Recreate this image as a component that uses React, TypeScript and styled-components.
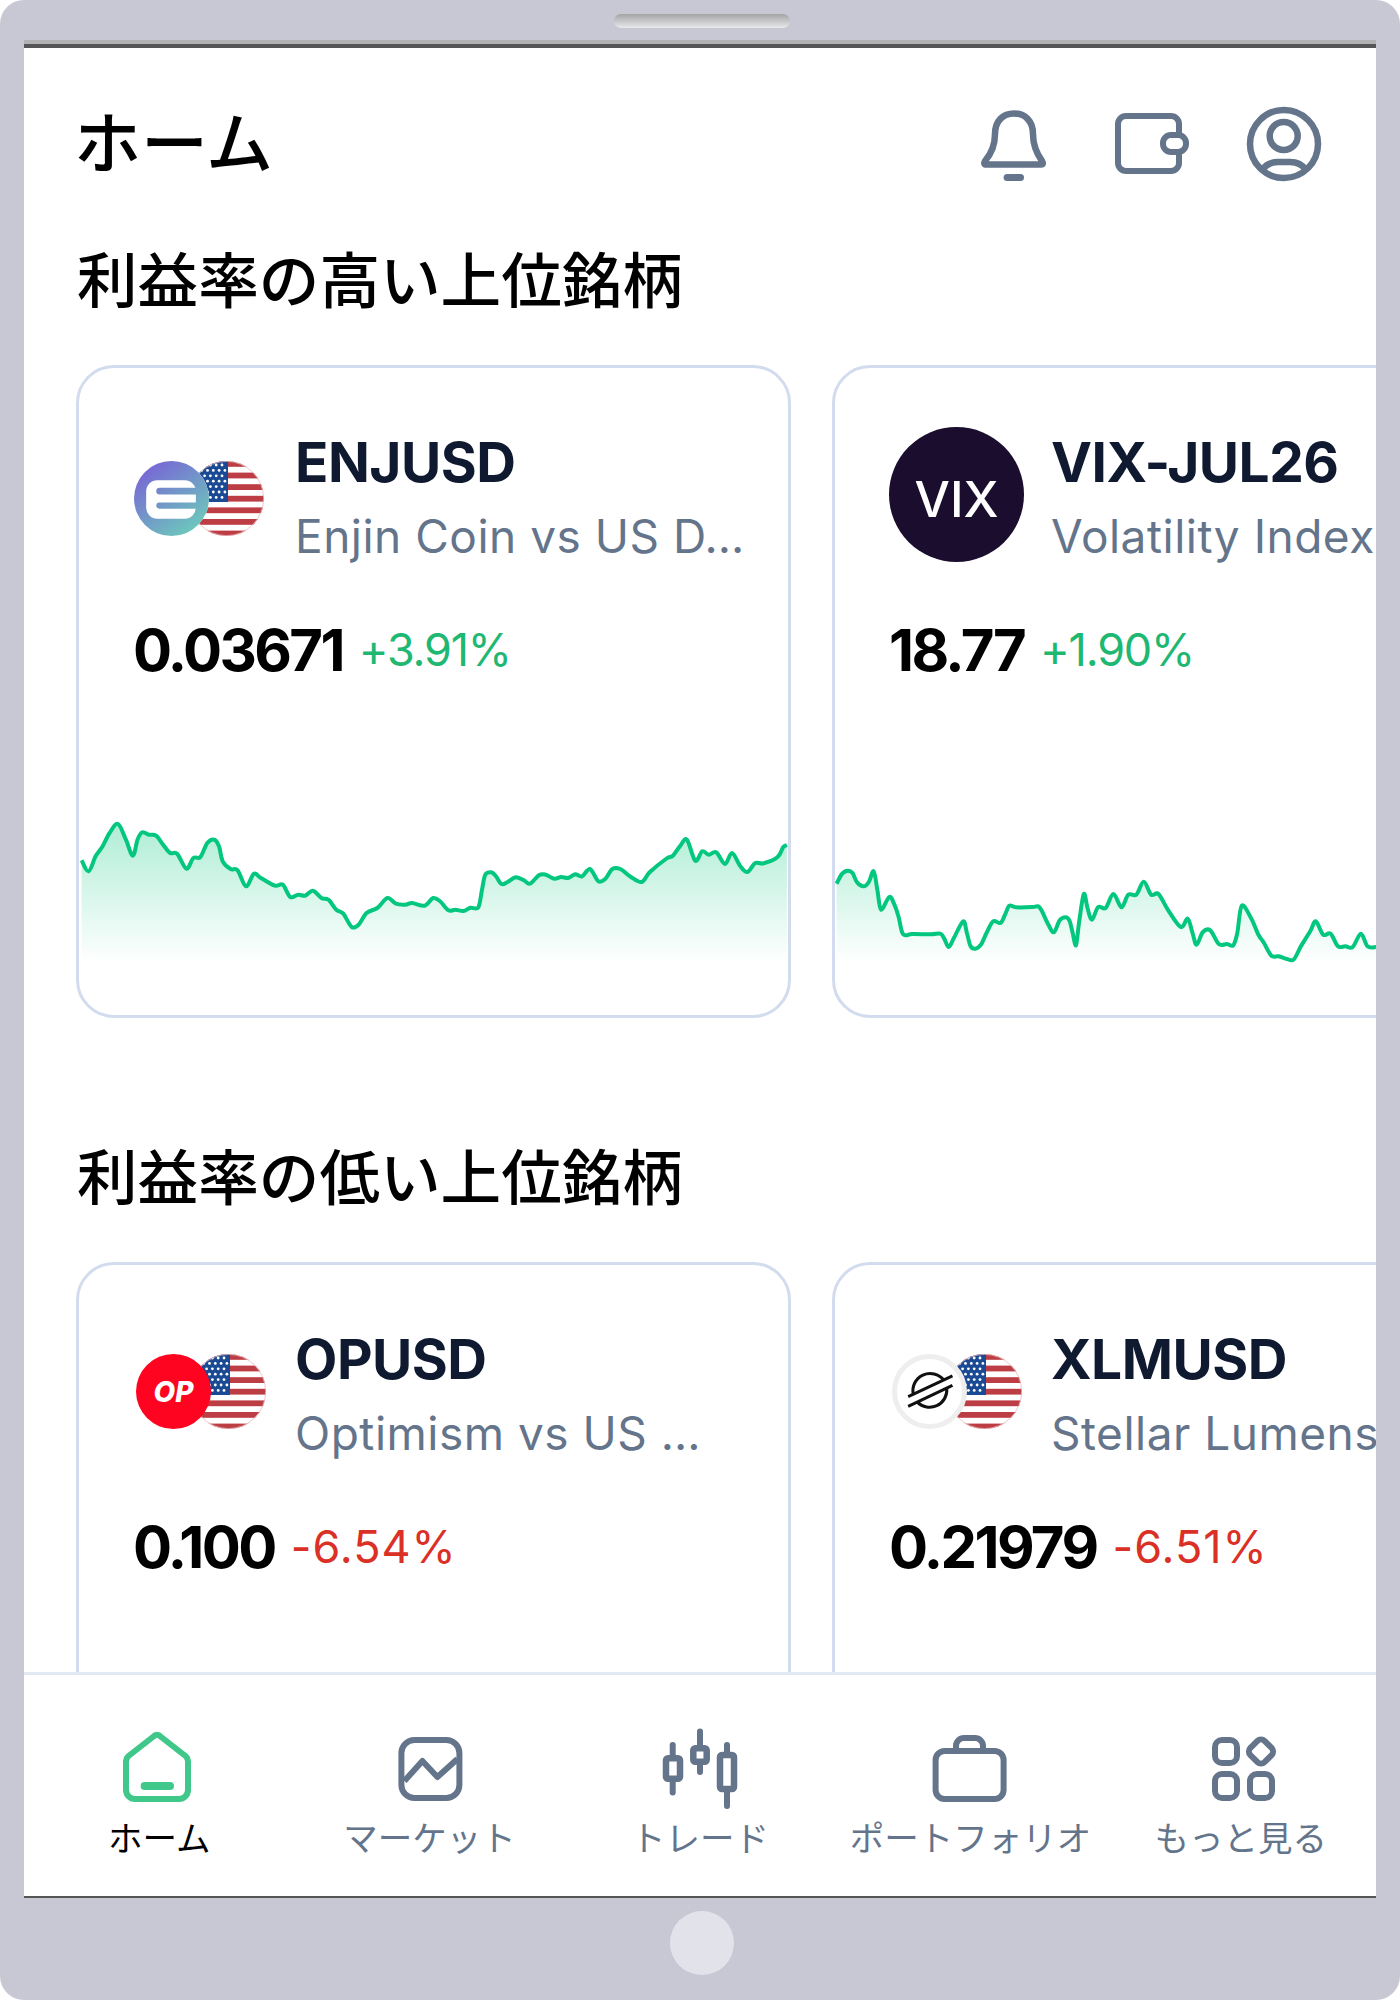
import React, {FC, useId} from "react";
import styled, {createGlobalStyle} from "styled-components";

const SLATE = '#64748B';
const GREEN = '#1FB873';
const RED = '#DB3026';
const LINE_GREEN = '#04C77F';
const BORDER = '#D2DCEE';
const BEZEL = '#C8C8D4';
const LATIN = `"Inter", "Noto Sans CJK JP", sans-serif`;
const CJK = `"Noto Sans CJK JP", sans-serif`;

const GlobalStyle = createGlobalStyle`
  html, body {
    margin: 0;
    background: #fff;
  }
`;

const Device = styled.div`
  width: 1400px;
  height: 2000px;
  display: flex;
  flex-direction: column;
  background: ${BEZEL};
  border-radius: 24px;
  overflow: hidden;
`;
const TopBezel = styled.div`
  height: 40px;
  flex: none;
  display: flex;
  justify-content: center;
  align-items: flex-start;
  padding: 14px 0 0 3px;
  box-sizing: border-box;
`;
const Speaker = styled.div`
  width: 176px;
  height: 14px;
  border-radius: 7px;
  background: linear-gradient(#a4a4a6, #e9e9ec);
`;
const Screen = styled.div`
  flex: 1;
  min-height: 0;
  margin: 0 24px;
  display: flex;
  flex-direction: column;
  background: #fff;
  border-top: 4px solid #b2b2b4;
  box-shadow: inset 0 4px 0 #555;
  border-bottom: 2px solid #555;
`;
const BottomBezel = styled.div`
  height: 102px;
  flex: none;
  display: flex;
  justify-content: center;
  padding: 13px 0 0 3px;
  box-sizing: border-box;
`;
const HomeButton = styled.div`
  width: 64px;
  height: 64px;
  border-radius: 50%;
  background: #E2E3EA;
`;
const Content = styled.div`
  flex: 1;
  min-height: 0;
  overflow: hidden;
`;
const Header = styled.header`
  display: flex;
  align-items: center;
  height: 80px;
  margin-top: 60px;
  padding: 0 52px 0 50px;
`;
const PageTitle = styled.h1`
  flex: 1;
  margin: 0 0 11px;
  font: 500 67px/80px ${CJK};
  color: #000;
`;
const HeaderIcons = styled.div`
  display: flex;
  gap: 52px;
  color: ${SLATE};
`;
const Section = styled.section<{$gap: number}>`
  margin-top: ${p => p.$gap}px;
`;
const SectionTitle = styled.h2`
  margin: 0 0 48px;
  padding-left: 53px;
  font: 500 60.6px/80px ${CJK};
  color: #000;
`;
const Carousel = styled.div`
  display: flex;
  gap: 41px;
  padding-left: 52px;
`;
const Card = styled.article`
  flex: none;
  width: 715px;
  height: 653px;
  box-sizing: border-box;
  border: 3px solid ${BORDER};
  border-radius: 38px;
  display: flex;
  flex-direction: column;
  overflow: hidden;
`;
const CardHead = styled.div`
  display: flex;
  gap: 27px;
  padding: 59px 54px 0;
  height: 145px;
  box-sizing: content-box;
`;
const LogoBox = styled.div`
  flex: none;
  width: 135px;
  height: 135px;
  display: flex;
  align-items: center;
  justify-content: center;
`;
const Names = styled.div`
  min-width: 0;
  flex: 1;
  margin-top: -2px;
`;
const Symbol = styled.div`
  font: 700 55px/74px ${LATIN};
  letter-spacing: -0.5px;
  color: #0F1A30;
  white-space: nowrap;
`;
const Description = styled.div`
  font: 400 46px/75px ${LATIN};
  letter-spacing: 0.5px;
  color: ${SLATE};
  white-space: nowrap;
`;
const Quote = styled.div`
  display: flex;
  align-items: center;
  gap: 16px;
  padding: 43px 54px 0;
`;
const Price = styled.span`
  font: 700 58px/70px ${LATIN};
  letter-spacing: -2.6px;
  color: #000;
`;
const Change = styled.span<{$up: boolean}>`
  font: 400 45px/70px ${LATIN};
  letter-spacing: ${p => (p.$up ? -1.2 : 1)}px;
  color: ${p => (p.$up ? GREEN : RED)};
`;
const Chart = styled.svg`
  display: block;
  flex: none;
  margin-top: auto;
  margin-bottom: 48px;
`;
const PairWrap = styled.div<{$dx: number; $dy: number}>`
  display: flex;
  margin: ${p => p.$dy}px 0 0 ${p => p.$dx}px;
`;
const Coin = styled.div<{$bg: string}>`
  position: relative;
  z-index: 1;
  flex: none;
  width: 75px;
  height: 75px;
  box-sizing: border-box;
  border-radius: 50%;
  background: ${p => p.$bg};
  display: flex;
  align-items: center;
  justify-content: center;
`;
const RingCoin = styled(Coin)`
  border: 5px solid #EEEEEE;
`;
const OpMark = styled.span`
  font: italic 800 28px/1 ${LATIN};
  color: #fff;
`;
const IndexCoin = styled.div`
  width: 135px;
  height: 135px;
  border-radius: 50%;
  background: #1A0D2E;
  color: #fff;
  font: 500 50px/145px ${LATIN};
  text-align: center;
  overflow: hidden;
`;
const FlagSvg = styled.svg`
  flex: none;
  margin-left: -20px;
`;
const NavBar = styled.nav`
  flex: none;
  height: 224px;
  box-sizing: border-box;
  border-top: 3px solid #E2E8F4;
  padding-top: 49px;
  display: grid;
  grid-template-columns: repeat(5, 1fr);
  background: #fff;
`;
const NavItem = styled.a<{$active?: boolean}>`
  display: flex;
  flex-direction: column;
  align-items: center;
  font: 400 34.5px/44px ${CJK};
  color: ${p => (p.$active ? '#000' : SLATE)};
  svg {
    color: ${p => (p.$active ? '#40C78A' : SLATE)};
  }
`;

const toPoints = (raw: number[], sx: number, dx: number, dy: number): number[][] => {
  const pts: number[][] = [];
  for (let i = 0; i < raw.length; i += 2) pts.push([raw[i] / sx + dx, raw[i + 1] / 3 + dy]);
  return pts;
};

// catmull-rom, the chart lines in the app are smoothed
const smooth = (pts: number[][]) => {
  let d = `M${pts[0][0].toFixed(1)} ${pts[0][1].toFixed(1)}`;
  for (let i = 0; i < pts.length - 1; i++) {
    const p0 = pts[Math.max(i - 1, 0)];
    const p1 = pts[i];
    const p2 = pts[i + 1];
    const p3 = pts[Math.min(i + 2, pts.length - 1)];
    const c1x = p1[0] + (p2[0] - p0[0]) / 6;
    const c1y = p1[1] + (p2[1] - p0[1]) / 6;
    const c2x = p2[0] - (p3[0] - p1[0]) / 6;
    const c2y = p2[1] - (p3[1] - p1[1]) / 6;
    d += `C${c1x.toFixed(1)} ${c1y.toFixed(1)} ${c2x.toFixed(1)} ${c2y.toFixed(1)} ${p2[0].toFixed(1)} ${p2[1].toFixed(1)}`;
  }
  return d;
};

const ENJ_LINE = toPoints([
  25,232,40,265,55,220,70,190,85,150,103,123,120,170,135,218,145,170,155,148,170,155,185,158,200,185,215,210,230,212,250,257,
  265,225,280,222,295,180,310,170,320,190,328,235,345,258,360,262,378,310,395,272,410,285,440,308,457,305,473,342,490,335,505,338,
  522,323,540,345,555,350,572,380,587,392,605,432,620,425,637,390,660,375,682,345,700,362,720,365,735,360,762,368,780,345,795,355,
  813,382,828,380,845,384,860,374,877,373,885,320,892,275,905,268,915,280,927,303,940,297,957,283,975,292,988,302,1008,276,1022,275,
  1040,287,1055,282,1070,285,1085,274,1100,280,1117,258,1135,295,1150,287,1165,258,1182,258,1205,282,1228,297,1245,268,1280,228,1295,218,1310,190,
  1325,170,1343,233,1358,205,1372,215,1388,208,1407,243,1422,210,1440,250,1455,267,1472,240,1490,241,1520,222,1532,192,1540,186,
], 2.148, -9, -30);

const VIX_LINE = toPoints([
  45,302,60,272,75,263,88,270,100,298,118,310,132,297,145,265,155,320,165,380,187,342,200,362,212,400,222,448,232,457,250,453,300,454,325,452,
  335,465,348,492,362,465,387,415,397,450,407,490,420,497,435,485,450,450,468,415,488,420,500,395,512,368,530,373,575,372,590,370,600,385,615,420,
  632,448,648,412,665,403,675,415,683,450,692,487,700,420,713,333,723,375,735,410,752,372,772,375,793,333,815,373,833,335,855,335,875,296,895,335,
  915,333,940,380,975,432,994,407,1007,450,1018,485,1035,447,1055,442,1078,483,1100,483,1117,487,1128,450,1140,368,1165,405,1185,455,1200,480,
  1220,518,1240,520,1260,527,1280,530,1300,490,1325,445,1340,415,1360,455,1380,452,1400,490,1420,490,1440,492,1462,452,1480,490,1503,492,
], 2.703, -15, -30);

const Sparkline: FC<{points: number[][]}> = ({points}) => {
  const id = useId();
  const line = smooth(points);
  const last = points[points.length - 1];
  return (
    <Chart width={709} height={154} viewBox="0 0 709 154">
      <defs>
        <linearGradient id={id} gradientUnits="userSpaceOnUse" x1="0" y1="10" x2="0" y2="150">
          <stop offset="0" stopColor={LINE_GREEN} stopOpacity="0.32"/>
          <stop offset="1" stopColor={LINE_GREEN} stopOpacity="0"/>
        </linearGradient>
      </defs>
      <path d={`${line}L${last[0]} 154L${points[0][0]} 154Z`} fill={`url(#${id})`}/>
      <path d={line} fill="none" stroke={LINE_GREEN} strokeWidth="4" strokeLinejoin="round"/>
    </Chart>
  );
};

const Flag: FC = () => {
  const id = useId();
  const stars: number[][] = [];
  for (let r = 0; r < 7; r++) {
    for (let c = 0; c < 6; c++) stars.push([4 + c * 5.8 + (r % 2) * 2.9, 4 + r * 5.4]);
  }
  return (
    <FlagSvg width={75} height={75} viewBox="0 0 75 75">
      <defs>
        <clipPath id={id}><circle cx="37.5" cy="37.5" r="37.5"/></clipPath>
      </defs>
      <g clipPath={`url(#${id})`}>
        <rect width="75" height="75" fill="#fff"/>
        {Array.from({length: 7}, (_, i) => <rect key={i} y={i * 11.6} width="75" height="5.8" fill="#BD3D44"/>)}
        <rect width="39" height="41" fill="#1B4A94"/>
        {stars.map(([x, y], i) => <circle key={i} cx={x} cy={y} r="1.4" fill="#fff"/>)}
      </g>
      <circle cx="37.5" cy="37.5" r="37.1" fill="none" stroke="#E9B9BC" strokeWidth="0.8"/>
    </FlagSvg>
  );
};

const EnjinMark: FC = () => {
  const id = useId();
  return (
    <svg width={75} height={75} viewBox="0 0 74 74">
      <defs>
        <linearGradient id={id} gradientUnits="userSpaceOnUse" x1="12" y1="6" x2="60" y2="70">
          <stop offset="0" stopColor="#7866D5"/>
          <stop offset="1" stopColor="#6CCABB"/>
        </linearGradient>
      </defs>
      <circle cx="37" cy="37" r="37" fill={`url(#${id})`}/>
      <rect x="12" y="19" width="49" height="38" rx="11" fill="#fff"/>
      <rect x="22" y="26.5" width="42" height="6.5" rx="3.2" fill={`url(#${id})`}/>
      <rect x="22" y="41" width="42" height="6" rx="3" fill={`url(#${id})`}/>
    </svg>
  );
};

const StellarMark: FC = () => (
  <svg width={65} height={65} viewBox="5 5 64 64" fill="none" stroke="#111" strokeWidth="3">
    <path d="M16 42L59.6 21.7M16 51.7L59.6 31"/>
    <path d="M21 39.7A17 17 0 0 1 51 25.7M54 34A17 17 0 0 1 25 47.5"/>
  </svg>
);

const CoinPair: FC<{dx?: number; dy?: number; children: React.ReactNode}> = ({dx = 0, dy = 0, children}) => (
  <PairWrap $dx={dx} $dy={dy}>
    {children}
    <Flag/>
  </PairWrap>
);

const BellIcon: FC = () => (
  <svg width={80} height={80} viewBox="0 0 80 80" fill="none" stroke="currentColor" strokeWidth="6.5" strokeLinejoin="round">
    <path d="M15 30C15 17 23 9.5 34 9.5C45 9.5 53 17 53 30C53 42 57 50 62 57Q64 60.5 61 60.5H6.5Q3 60.5 5 57C11 50 15 42 15 30Z"/>
    <rect x="23.6" y="70" width="20.4" height="7" rx="3.5" fill="currentColor" stroke="none"/>
  </svg>
);

const WalletIcon: FC = () => (
  <svg width={80} height={80} viewBox="0 0 80 80" fill="none" stroke="currentColor" strokeWidth="6">
    <path d="M67 31V20a8 8 0 0 0-8-8H14a8 8 0 0 0-8 8V59a8 8 0 0 0 8 8H59a8 8 0 0 0 8-8V48"/>
    <rect x="51" y="31" width="23" height="17" rx="8"/>
  </svg>
);

const ProfileIcon: FC = () => (
  <svg width={80} height={80} viewBox="0 0 80 80" fill="none" stroke="currentColor" strokeWidth="6.5">
    <circle cx="40" cy="40" r="34"/>
    <circle cx="39.7" cy="32" r="14"/>
    <path d="M18 66C22 60 28 58 34 58H46C52 58 58 60 62 66"/>
  </svg>
);

const NavIcon: FC<{children: React.ReactNode}> = ({children}) => (
  <svg width={90} height={90} viewBox="0 0 90 90" fill="none" stroke="currentColor" strokeWidth="6" strokeLinecap="round" strokeLinejoin="round">
    {children}
  </svg>
);

type CardData = {symbol: string; name: string; price: string; change: string; up: boolean; logo: React.ReactNode; line?: number[][]};

const TOP_CARDS: CardData[] = [
  {symbol: 'ENJUSD', name: 'Enjin Coin vs US D…', price: '0.03671', change: '+3.91%', up: true, logo: <CoinPair dx={-3} dy={8}><Coin $bg="#fff"><EnjinMark/></Coin></CoinPair>, line: ENJ_LINE},
  {symbol: 'VIX-JUL26', name: 'Volatility Index', price: '18.77', change: '+1.90%', up: true, logo: <IndexCoin>VIX</IndexCoin>, line: VIX_LINE},
];
const LOW_CARDS: CardData[] = [
  {symbol: 'OPUSD', name: 'Optimism vs US …', price: '0.100', change: '-6.54%', up: false, logo: <CoinPair dx={1}><Coin $bg="#FF0420"><OpMark>OP</OpMark></Coin></CoinPair>},
  {symbol: 'XLMUSD', name: 'Stellar Lumens', price: '0.21979', change: '-6.51%', up: false, logo: <CoinPair><RingCoin $bg="#fff"><StellarMark/></RingCoin></CoinPair>},
];

const SymbolCard: FC<{data: CardData}> = ({data}) => (
  <Card>
    <CardHead>
      <LogoBox>{data.logo}</LogoBox>
      <Names>
        <Symbol>{data.symbol}</Symbol>
        <Description>{data.name}</Description>
      </Names>
    </CardHead>
    <Quote>
      <Price>{data.price}</Price>
      <Change $up={data.up}>{data.change}</Change>
    </Quote>
    {data.line && <Sparkline points={data.line}/>}
  </Card>
);

const App: FC = () => (
  <Device>
    <GlobalStyle/>
    <TopBezel><Speaker/></TopBezel>
    <Screen>
      <Content>
        <Header>
          <PageTitle>ホーム</PageTitle>
          <HeaderIcons>
            <BellIcon/>
            <WalletIcon/>
            <ProfileIcon/>
          </HeaderIcons>
        </Header>
        <Section $gap={53}>
          <SectionTitle>利益率の高い上位銘柄</SectionTitle>
          <Carousel>{TOP_CARDS.map(c => <SymbolCard key={c.symbol} data={c}/>)}</Carousel>
        </Section>
        <Section $gap={116}>
          <SectionTitle>利益率の低い上位銘柄</SectionTitle>
          <Carousel>{LOW_CARDS.map(c => <SymbolCard key={c.symbol} data={c}/>)}</Carousel>
        </Section>
      </Content>
      <NavBar>
        <NavItem $active>
          <NavIcon>
            <path d="M39.5 12.5a4.5 4.5 0 0 1 7 0L71.5 32a8 8 0 0 1 2.5 5V66a9 9 0 0 1-9 9H21a9 9 0 0 1-9-9V37a8 8 0 0 1 2.5-5Z"/>
            <rect x="26.6" y="58" width="33.4" height="8" rx="4" fill="currentColor" stroke="none"/>
          </NavIcon>
          ホーム
        </NavItem>
        <NavItem>
          <NavIcon>
            <rect x="16.4" y="16" width="58" height="58" rx="13"/>
            <path d="M19.4 57L37.4 37L52.4 53L72.4 35" strokeLinecap="butt"/>
          </NavIcon>
          マーケット
        </NavItem>
        <NavItem>
          <NavIcon>
            <path d="M17.7 21V31M17.7 58V68.5M45 7.5V21M45 41V48M72 21V28M72 68V82"/>
            <rect x="11" y="34.3" width="14" height="20.4" rx="2" strokeWidth="6.5"/>
            <rect x="38.3" y="24.3" width="13.4" height="13.4" rx="2" strokeWidth="6.5"/>
            <rect x="65" y="31" width="14" height="34" rx="2" strokeWidth="6.5"/>
          </NavIcon>
          トレード
        </NavItem>
        <NavItem>
          <NavIcon>
            <rect x="10.6" y="27" width="68" height="48" rx="9"/>
            <path d="M31 27V22a8 8 0 0 1 8-8H50a8 8 0 0 1 8 8V27"/>
          </NavIcon>
          ポートフォリオ
        </NavItem>
        <NavItem>
          <NavIcon>
            <rect x="19" y="16" width="22" height="23" rx="7"/>
            <rect x="19" y="50" width="22" height="24" rx="7"/>
            <rect x="54" y="50" width="22" height="24" rx="7"/>
            <rect x="55" y="17.5" width="20" height="20" rx="5" transform="rotate(45 65 27.5)"/>
          </NavIcon>
          もっと見る
        </NavItem>
      </NavBar>
    </Screen>
    <BottomBezel><HomeButton/></BottomBezel>
  </Device>
);

export default App;
